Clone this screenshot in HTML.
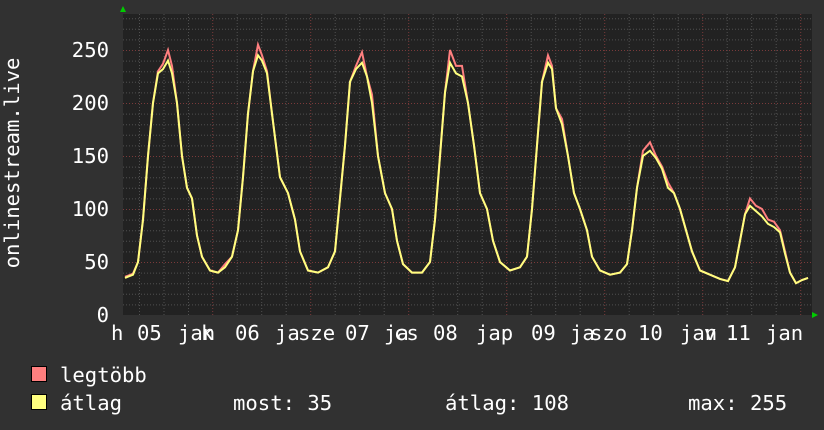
<!DOCTYPE html>
<html><head><meta charset="utf-8"><style>
html,body{margin:0;padding:0;background:#313131;}
svg{display:block}
text{font-family:"DejaVu Sans Mono","Liberation Mono",monospace;font-size:20.6px;fill:#fff}
</style></head><body>
<svg width="824" height="430" viewBox="0 0 824 430">
<rect width="824" height="430" fill="#313131"/>
<rect x="123" y="14" width="689" height="301" fill="#222"/>
<g stroke="#505050" stroke-dasharray="1,2" stroke-width="1">
<line x1="123" x2="812" y1="304.9" y2="304.9"/><line x1="123" x2="812" y1="294.3" y2="294.3"/><line x1="123" x2="812" y1="283.7" y2="283.7"/><line x1="123" x2="812" y1="273.1" y2="273.1"/>
<line x1="123" x2="812" y1="251.9" y2="251.9"/><line x1="123" x2="812" y1="241.3" y2="241.3"/><line x1="123" x2="812" y1="230.7" y2="230.7"/><line x1="123" x2="812" y1="220.1" y2="220.1"/>
<line x1="123" x2="812" y1="198.9" y2="198.9"/><line x1="123" x2="812" y1="188.3" y2="188.3"/><line x1="123" x2="812" y1="177.7" y2="177.7"/><line x1="123" x2="812" y1="167.1" y2="167.1"/>
<line x1="123" x2="812" y1="145.9" y2="145.9"/><line x1="123" x2="812" y1="135.3" y2="135.3"/><line x1="123" x2="812" y1="124.7" y2="124.7"/><line x1="123" x2="812" y1="114.1" y2="114.1"/>
<line x1="123" x2="812" y1="92.9" y2="92.9"/><line x1="123" x2="812" y1="82.3" y2="82.3"/><line x1="123" x2="812" y1="71.7" y2="71.7"/><line x1="123" x2="812" y1="61.1" y2="61.1"/>
<line x1="123" x2="812" y1="39.9" y2="39.9"/><line x1="123" x2="812" y1="29.3" y2="29.3"/><line x1="123" x2="812" y1="18.7" y2="18.7"/>
<line y1="14" y2="315" x1="139.5" x2="139.5"/><line y1="14" y2="315" x1="164" x2="164"/><line y1="14" y2="315" x1="188.5" x2="188.5"/>
<line y1="14" y2="315" x1="237.2" x2="237.2"/><line y1="14" y2="315" x1="261.7" x2="261.7"/><line y1="14" y2="315" x1="286.2" x2="286.2"/>
<line y1="14" y2="315" x1="335.2" x2="335.2"/><line y1="14" y2="315" x1="359.7" x2="359.7"/><line y1="14" y2="315" x1="384.2" x2="384.2"/>
<line y1="14" y2="315" x1="433.2" x2="433.2"/><line y1="14" y2="315" x1="457.7" x2="457.7"/><line y1="14" y2="315" x1="482.2" x2="482.2"/>
<line y1="14" y2="315" x1="531.2" x2="531.2"/><line y1="14" y2="315" x1="555.7" x2="555.7"/><line y1="14" y2="315" x1="580.2" x2="580.2"/>
<line y1="14" y2="315" x1="629.2" x2="629.2"/><line y1="14" y2="315" x1="653.7" x2="653.7"/><line y1="14" y2="315" x1="678.2" x2="678.2"/>
<line y1="14" y2="315" x1="727.2" x2="727.2"/><line y1="14" y2="315" x1="751.7" x2="751.7"/><line y1="14" y2="315" x1="776.2" x2="776.2"/>
</g>
<g stroke="#7a3a3a" stroke-dasharray="1,2">
<line x1="123" x2="812" y1="262.5" y2="262.5"/><line x1="123" x2="812" y1="209.5" y2="209.5"/><line x1="123" x2="812" y1="156.5" y2="156.5"/><line x1="123" x2="812" y1="103.5" y2="103.5"/><line x1="123" x2="812" y1="50.5" y2="50.5"/>
<line y1="14" y2="315" x1="212.7" x2="212.7"/><line y1="14" y2="315" x1="310.7" x2="310.7"/><line y1="14" y2="315" x1="408.7" x2="408.7"/><line y1="14" y2="315" x1="506.7" x2="506.7"/><line y1="14" y2="315" x1="604.7" x2="604.7"/><line y1="14" y2="315" x1="702.7" x2="702.7"/><line y1="14" y2="315" x1="800.7" x2="800.7"/>
</g>
<g transform="translate(0,315) scale(1,-1.06)" fill="none" stroke-width="2" stroke-linejoin="miter">
<polyline vector-effect="non-scaling-stroke" stroke="#ff7f7f" transform="translate(0,3)" points="125,33 133,36 138,47 143,87 148,147 153,197 158,227 163,234 168,247 172,232 177,197 182,147 187,117 192,107 197,72 202,52 210,39 218,37 225,45 232,52 238,77 243,127 248,187 253,227 258,252 262,242 267,227 272,187 280,127 288,112 295,87 300,57 308,39 318,37 328,42 335,57 340,107 345,157 350,217 356,232 362,245 367,222 372,205 378,147 385,112 392,97 397,67 403,45 412,37 422,37 430,47 435,87 440,147 445,207 450,247 456,232 462,232 468,197 474,157 480,112 487,97 493,67 500,47 510,39 520,42 527,52 532,97 537,157 542,217 548,242 552,232 556,192 562,182 568,147 574,112 580,97 587,77 592,52 600,39 610,35 620,37 627,45 632,77 637,117 643,152 650,160 656,147 662,137 668,122 674,112 680,97 686,77 692,57 700,39 710,35 720,31 728,29 735,42 740,67 745,92 750,107 756,100 762,97 768,87 774,85 780,77 785,57 790,37 796,27 802,30 808,32"/>
<polyline vector-effect="non-scaling-stroke" stroke="#ffff7f" points="125,35 133,38 138,50 143,90 148,150 153,200 158,228 163,232 168,240 172,228 177,200 182,150 187,120 192,110 197,75 202,55 210,42 218,40 225,45 232,55 238,80 243,130 248,190 253,230 258,245 262,240 267,228 272,190 280,130 288,115 295,90 300,60 308,42 318,40 328,45 335,60 340,110 345,160 350,220 356,232 362,238 367,225 372,200 378,150 385,115 392,100 397,70 403,48 412,40 422,40 430,50 435,90 440,150 445,210 450,238 456,228 462,225 468,200 474,160 480,115 487,100 493,70 500,50 510,42 520,45 527,55 532,100 537,160 542,220 548,238 552,232 556,195 562,180 568,150 574,115 580,100 587,80 592,55 600,42 610,38 620,40 627,48 632,80 637,120 643,150 650,155 656,148 662,138 668,120 674,115 680,100 686,80 692,60 700,42 710,38 720,34 728,32 735,45 740,70 745,95 750,103 756,98 762,93 768,86 774,83 780,78 785,58 790,40 796,30 802,33 808,35"/>
</g>
<polygon points="120,12 126,12 123,6" fill="#0c0"/>
<polygon points="812,312 812,318 818,315" fill="#0c0"/>
<g text-anchor="end">
<text x="109" y="57">250</text><text x="109" y="110">200</text><text x="109" y="163">150</text><text x="109" y="216">100</text><text x="109" y="269">50</text><text x="109" y="322">0</text>
</g>
<text transform="translate(19,163) rotate(-90)" text-anchor="middle">onlinestream.live</text>
<g>
<text x="111" y="340">h</text><text x="137" y="340">05</text><text x="178" y="340">jan</text><text x="201" y="340">k</text>
<text x="235" y="340">06</text><text x="275" y="340">ja</text><text x="298" y="340">sze</text>
<text x="345" y="340">07</text><text x="384" y="340">ja</text><text x="394" y="340">cs</text>
<text x="433" y="340">08</text><text x="476" y="340">jap</text>
<text x="531" y="340">09</text><text x="570" y="340">ja</text><text x="590" y="340">szo</text>
<text x="638" y="340">10</text><text x="680" y="340">jan</text><text x="704" y="340">v</text>
<text x="726" y="340">11</text><text x="766" y="340">jan</text>
</g>
<rect x="31.5" y="366.5" width="15" height="15" fill="#ff7f7f" stroke="#000"/>
<rect x="31.5" y="394.5" width="15" height="15" fill="#ffff7f" stroke="#000"/>
<text x="60" y="382">legtöbb</text>
<text x="60" y="410">átlag</text>
<text x="233" y="410">most: 35</text>
<text x="445" y="410">átlag: 108</text>
<text x="688" y="410">max: 255</text>
</svg>
</body></html>
